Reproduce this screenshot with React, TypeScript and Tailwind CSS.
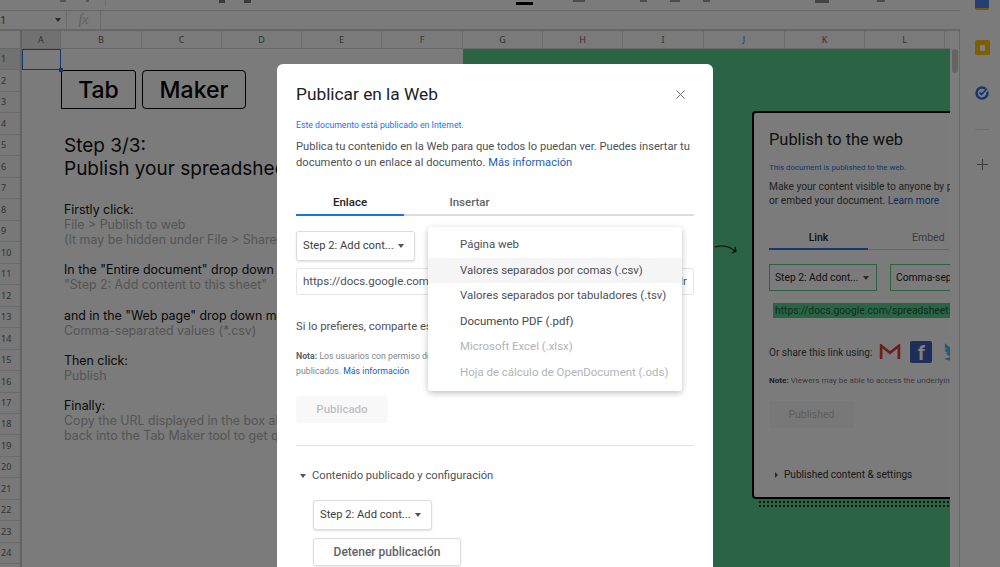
import React from "react";
import { X } from "lucide-react";

const cols: [string, number][] = [["A",39],["B",81],["C",80],["D",80],["E",80],["F",81],["G",80],["H",80],["I",81],["J",81],["K",80],["L",80]];
const rows = Array.from({ length: 24 }, (_, i) => i + 1);

function Caret({ className = "" }: { className?: string }) {
  return <span className={"inline-block shrink-0 w-0 h-0 border-x-[3.5px] border-x-transparent border-t-[4px] border-t-[#555] " + className} />;
}

function Sheet() {
  return (
    <div className="absolute inset-0 flex flex-col bg-[#f6f6f6]">
      <div className="h-[11px] shrink-0 border-b border-[#cfcfcf] flex items-start w-[960px]">
        <div className="ml-[60px] w-[6px] h-[2px] bg-[#aaa]" />
        <div className="ml-[20px] w-[3px] h-[2px] bg-[#aaa]" />
        <div className="ml-[16px] w-px h-[6px] bg-[#ddd]" />
        <div className="ml-[113px] w-[6px] h-[3px] bg-[#777]" />
        <div className="ml-[19px] w-[7px] h-[3px] bg-[#777]" />
        <div className="ml-[265px] w-[17px] h-[3px] mt-[2px] bg-black" />
        <div className="ml-[40px] w-[12px] h-[2px] bg-[#999]" />
        <div className="ml-[55px] w-[7px] h-[2px] bg-[#999]" />
        <div className="ml-[23px] w-[10px] h-[2px] bg-[#999]" />
        <div className="ml-[23px] w-[7px] h-[2px] bg-[#999]" />
        <div className="ml-[105px] w-[14px] h-[3px] bg-[#888]" />
        <div className="ml-[48px] w-[8px] h-[2px] bg-[#999]" />
      </div>
      <div className="h-[20px] shrink-0 border-b-2 border-[#cfcfcf] flex items-center text-[#777] w-[960px]">
        <div className="w-[66px] flex justify-between items-center pr-[5px] text-[11px] text-[#555]"><span className="-ml-[7px]">A1</span><Caret /></div>
        <div className="w-[35px] h-full border-x border-[#d8d8d8] text-center text-[14px] leading-[18px] italic text-[#c4c4c4] font-['Liberation_Serif',serif]">fx</div>
      </div>
      <div className="flex-1 flex min-h-0">
        <div className="w-[950px] flex flex-col shrink-0">
          <div className="h-[18px] shrink-0 flex border-b border-[#d0d0d0] text-[9px] text-[#666] bg-[#f4f4f4]">
            <div className="w-[22px] shrink-0 border-r-2 border-[#c4c4c4]" />
            {cols.map(([c, w]) => (
              <div key={c} style={{ width: w }} className={"shrink-0 flex items-center justify-center border-r border-[#d8d8d8] " + (c === "A" ? "bg-[#e2e2e2]" : "")}>{c}</div>
            ))}
          </div>
          <div className="flex flex-1 min-h-0 overflow-hidden">
            <div className="w-[22px] shrink-0 flex flex-col border-r-2 border-[#c4c4c4] bg-[#f0f0f0] text-[9px] text-[#666]">
              {rows.map((r) => (
                <div key={r} className={"h-[21.47px] shrink-0 flex items-center pl-[1px] border-b border-[#d4d4d4] " + (r === 1 ? "bg-[#e2e2e2]" : "")}>{r}</div>
              ))}
            </div>
            <div className="flex-1 flex min-w-0 relative">
              <div className="absolute left-0 top-0 w-[39px] h-[21px] border border-[#2f6fd6]" />
              <div className="absolute left-[37px] top-[19px] w-[4px] h-[4px] bg-[#2f6fd6]" />
              <div className="w-[441px] shrink-0 font-['Inter',sans-serif] text-[#111] pl-[42px] overflow-hidden">
                <div className="flex gap-[6px] mt-[21px] -ml-[3px] text-[23px] leading-none font-medium text-black">
                  <div className="w-[75px] h-[39px] pt-[1px] border-[1.5px] border-black flex items-center justify-center rounded-tr-[3px]">Tab</div>
                  <div className="w-[104px] h-[39px] pt-[1px] border-[1.5px] border-black rounded-[4px] flex items-center justify-center">Maker</div>
                </div>
                <div className="mt-[25px] text-[19px] leading-[23px] whitespace-nowrap">
                  <div>Step 3/3:</div>
                  <div>Publish your spreadsheet</div>
                </div>
                <div className="mt-[22px] text-[12.4px] leading-[15.1px] whitespace-nowrap">
                  <div>Firstly click:</div>
                  <div className="text-[#aaa]">File &gt; Publish to web</div>
                  <div className="text-[#aaa]">(It may be hidden under File &gt; Share</div>
                  <div className="h-[15.1px]" />
                  <div>In the "Entire document" drop down</div>
                  <div className="text-[#aaa]">"Step 2: Add content to this sheet"</div>
                  <div className="h-[15.1px]" />
                  <div>and in the "Web page" drop down menu</div>
                  <div className="text-[#aaa]">Comma-separated values (*.csv)</div>
                  <div className="h-[15.1px]" />
                  <div>Then click:</div>
                  <div className="text-[#aaa]">Publish</div>
                  <div className="h-[15.1px]" />
                  <div>Finally:</div>
                  <div className="text-[#aaa]">Copy the URL displayed in the box above</div>
                  <div className="text-[#aaa]">back into the Tab Maker tool to get q</div>
                </div>
              </div>
              <GreenPanel />
            </div>
          </div>
        </div>
        <div className="w-[10px] shrink-0 border-r border-[#d0d0d0] pt-[18px] pl-[2px] bg-[#f8f8f8]">
          <div className="w-[6px] h-[24px] rounded-full bg-[#c8c8c8]" />
        </div>
        <div className="w-[40px]" />
      </div>
    </div>
  );
}

function GreenPanel() {
  return (
    <div className="flex-1 min-w-0 bg-[#54c88a] overflow-hidden pl-[289px] pt-[62px] relative">
      <svg className="absolute left-[250px] top-[190px]" width="30" height="20" viewBox="0 0 30 20" fill="none" stroke="#111" strokeWidth="1.2">
        <path d="M2 8c7-2 14-1 20 4M19 14l4-2-1-4" />
      </svg>
      <div className="w-[300px] h-[388px] bg-[#f6f6f6] border-2 border-black rounded-[4px] pl-[15px] pt-[15px] font-['Roboto',sans-serif] text-[#222] whitespace-nowrap relative">
        <div className="text-[16.4px] leading-[24px]">Publish to the web</div>
        <div className="mt-[10px] text-[7.9px] leading-[12px] text-[#1a73e8]">This document is published to the web.</div>
        <div className="mt-[6px] text-[10.2px] leading-[14px] text-[#444]">Make your content visible to anyone by publishing it.</div>
        <div className="text-[10.2px] leading-[14px] text-[#444]">or embed your document. <span className="text-[#1a56b8]">Learn more</span></div>
        <div className="mt-[23px] flex text-[10.5px] leading-[14px] w-[180px] border-b border-[#ccc]">
          <div className="w-[99px] pb-[3px] text-center border-b-2 border-[#2a6fd8] -mb-px font-medium">Link</div>
          <div className="pl-[44px] text-[#777]">Embed</div>
        </div>
        <div className="mt-[14px] flex gap-[13px] text-[10.3px]">
          <div className="w-[108px] h-[27px] border-[1.5px] border-[#54c88a] flex items-center pl-[5px] justify-between pr-[7px]">Step 2: Add cont...<Caret /></div>
          <div className="w-[90px] h-[27px] border-[1.5px] border-[#54c88a] flex items-center pl-[5px]">Comma-sep</div>
        </div>
        <div className="mt-[12px] ml-[4px] h-[15px] bg-[#54c88a] text-[10.3px] leading-[15px] pl-[2px] text-[#1d5b3c]">https://docs.google.com/spreadsheets/d/e</div>
        <div className="mt-[22px] flex items-center text-[10px] h-[24px] text-[#444]">
          <span>Or share this link using:</span>
          <svg className="ml-[7px]" width="22" height="16" viewBox="0 0 24 18" fill="none"><path d="M2 17V2l10 8 10-8v15" stroke="#d93a3a" strokeWidth="3" /></svg>
          <div className="ml-[9px] w-[22px] h-[22px] bg-[#3b5fb0] rounded-[2px] text-white font-bold text-[20px] leading-[24px] text-center">f</div>
          <svg className="ml-[12px]" width="22" height="20" viewBox="0 0 22 20" fill="#55acee"><path d="M22 3c-1 .4-2 .6-2.6.7 1-.6 1.7-1.5 2-2.500-1 .5-2 1-3 1.100C17.500 1 16.300.5 15 .5c-2.500 0-4.500 2-4.500 4.500 0 .4 0 .7.1 1C6.800 5.800 3.500 4 1.300 1.300.9 2 .7 2.700.7 3.600c0 1.600.8 3 2 3.800-.7 0-1.400-.2-2-.6 0 2.200 1.600 4 3.600 4.400-.7.2-1.400.2-2 .1.6 1.800 2.200 3.100 4.200 3.100C4.900 15.900 2.500 16.700 0 16.400 2 17.700 4.400 18.500 7 18.500c8.300 0 12.800-6.900 12.800-12.800v-.6c.9-.6 1.600-1.400 2.200-2.100z"/></svg>
        </div>
        <div className="mt-[10px] text-[8.1px] leading-[12px] text-[#777]"><span className="font-bold text-[#444]">Note:</span> Viewers may be able to access the underlying data</div>
        <div className="mt-[15px] w-[85px] h-[27px] bg-[#f1f1f1] text-[10.5px] text-[#bbb] flex items-center justify-center">Published</div>
        <div className="mt-[39px] flex items-center text-[10.1px] pl-[6px] gap-[6px] text-[#333]">
          <span className="w-0 h-0 border-y-[3px] border-y-transparent border-l-[3px] border-l-[#555]" />
          Published content &amp; settings
        </div>
      </div>
      <div className="w-[300px] h-[7px] ml-[6px] mt-[1px] bg-[radial-gradient(#222_1px,transparent_1.2px)] bg-[length:4px_4px]" />
    </div>
  );
}

function SideRail() {
  return (
    <div className="absolute right-0 top-0 w-[40px] h-full flex flex-col items-center pl-[4px] z-0">
      <div className="w-[14px] h-[10px] bg-[#4a7fe8] border-b-2 border-[#e8b400] rounded-b-[2px]" />
      <div className="mt-[30px] w-[15px] h-[15px] rounded-[2px] bg-[#fbbc04] flex items-center justify-center">
        <div className="w-[5px] h-[6px] bg-white rounded-[1px]" />
      </div>
      <svg className="mt-[31px]" width="14" height="14" viewBox="0 0 14 14" fill="none">
        <circle cx="7" cy="7" r="5.5" stroke="#2b6fe0" strokeWidth="2.5" />
        <path d="M4 7l2.500 2.500L13 2" stroke="#fff" strokeWidth="3" />
        <path d="M4.500 6.500l2 2L12 2.500" stroke="#2b6fe0" strokeWidth="1.8" />
      </svg>
      <div className="mt-[29px] w-[14px] h-px bg-[#ddd]" />
      <svg className="mt-[29px]" width="11" height="11" viewBox="0 0 11 11" stroke="#777" strokeWidth="1"><path d="M5.500 0v11M0 5.500h11" /></svg>
    </div>
  );
}

function Select({ width }: { width: string }) {
  return (
    <div className={width + " h-[30px] shrink-0 border border-[#dadce0] rounded-[3px] shadow-[0_1px_2px_rgba(0,0,0,0.12)] flex items-center justify-between pl-[6px] pr-[10px] text-[11.2px] text-[#3c4043] bg-white"}>
      <span>Step 2: Add cont...</span>
      <Caret />
    </div>
  );
}

function Dialog() {
  return (
    <div className="absolute left-[277px] top-[64px] w-[436px] h-[540px] bg-white rounded-[6px] pl-[19px] pr-[19px] pt-[18px] font-['Roboto',sans-serif] text-[#4d5156] z-20">
      <div className="flex items-center justify-between h-[24px]">
        <h1 className="text-[17.3px] leading-[24px] text-[#202124]">Publicar en la Web</h1>
        <X size={15} strokeWidth={1.5} className="text-[#5f6368] mr-[6px]" />
      </div>
      <div className="mt-[13px] text-[8.7px] leading-[12px] text-[#1a73e8]">Este documento está publicado en Internet.</div>
      <p className="mt-[8px] text-[11.15px] leading-[15.5px] whitespace-nowrap">
        Publica tu contenido en la Web para que todos lo puedan ver. Puedes insertar tu<br />
        documento o un enlace al documento. <span className="text-[#1a5fb4]">Más información</span>
      </p>
      <div className="mt-[25px] flex border-b-2 border-[#dadce0] h-[21px] text-[11.5px]">
        <div className="w-[108px] h-[21px] text-center border-b-2 border-[#1a73e8] text-[#202124] font-medium leading-[14px]">Enlace</div>
        <div className="w-[131px] text-center text-[#5f6368] font-medium leading-[14px]">Insertar</div>
      </div>
      <div className="mt-[15px]"><Select width="w-[119px]" /></div>
      <div className="mt-[7px] h-[27px] w-[398px] border border-[#e3e5e8] rounded-[3px] flex items-center justify-between px-[6px] text-[11.5px]">
        <span>https://docs.google.com/</span><span>Ir</span>
      </div>
      <div className="mt-[24px] text-[11.25px] leading-[15px]">Si lo prefieres, comparte es</div>
      <div className="mt-[15px] text-[8.75px] leading-[15px] text-[#80868b]">
        <div><span className="font-bold text-[#5f6368]">Nota:</span> Los usuarios con permiso de</div>
        <div>publicados. <span className="text-[#1a5fb4]">Más información</span></div>
      </div>
      <div className="mt-[17px] w-[92px] h-[27px] rounded-[4px] bg-[#f8f8f8] text-[#bdc1c6] text-[11.5px] font-medium flex items-center justify-center">Publicado</div>
      <div className="mt-[22px] w-[398px] h-px bg-[#e0e0e0]" />
      <div className="mt-[22px] flex items-center text-[11.2px] leading-[16px] pl-[4px] gap-[6px]"><Caret />Contenido publicado y configuración</div>
      <div className="mt-[16px] ml-[17px] flex flex-col items-start gap-[8px]">
        <Select width="w-[119px]" />
        <div className="w-[148px] h-[28px] border border-[#dadce0] rounded-[3px] shadow-[0_1px_2px_rgba(0,0,0,0.1)] text-[12px] font-medium text-[#5f6368] flex items-center justify-center">Detener publicación</div>
      </div>
      <div className="absolute left-[151px] top-[163px] w-[254px] h-[164px] bg-white rounded-[3px] shadow-[0_2px_6px_rgba(0,0,0,0.25)] py-[5px] text-[11.45px] whitespace-nowrap">
        {[
          ["Página web", ""],
          ["Valores separados por comas (.csv)", "bg-[#f5f5f5]"],
          ["Valores separados por tabuladores (.tsv)", ""],
          ["Documento PDF (.pdf)", "text-[#45494e]"],
          ["Microsoft Excel (.xlsx)", "text-[#b0b3b8]"],
          ["Hoja de cálculo de OpenDocument (.ods)", "text-[#b0b3b8]"],
        ].map(([t, c]) => (
          <div key={t} className={"h-[25.5px] flex items-center pl-[32px] " + c}>{t}</div>
        ))}
      </div>
    </div>
  );
}

export default function App() {
  return (
    <div className="relative w-[1000px] h-[567px] overflow-hidden bg-white">
      <Sheet />
      <SideRail />
      <div className="absolute inset-0 bg-black/50 z-10" />
      <Dialog />
    </div>
  );
}
